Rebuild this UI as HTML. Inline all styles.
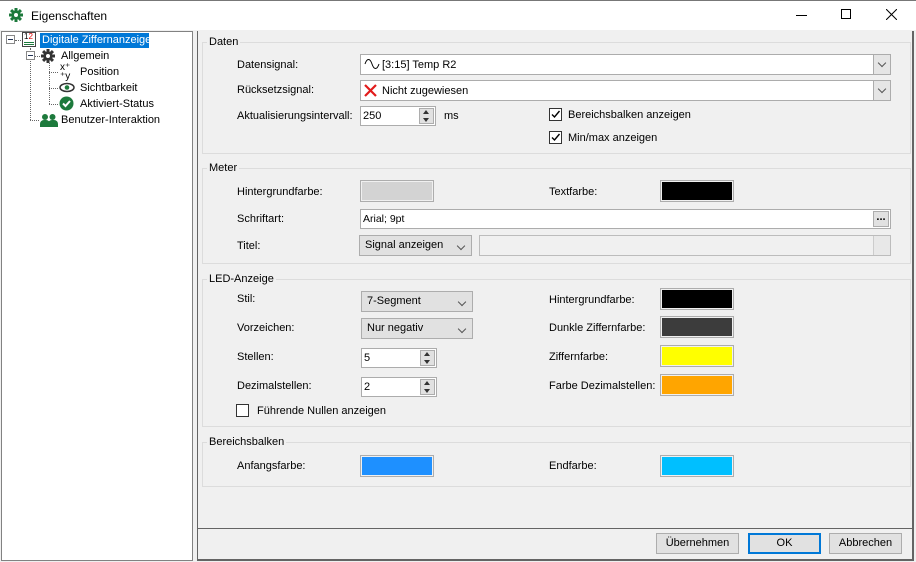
<!DOCTYPE html>
<html><head><meta charset="utf-8"><style>
*{box-sizing:border-box;margin:0;padding:0}
body{width:916px;height:562px;position:relative;background:#fff;font-family:"Liberation Sans",sans-serif;font-size:11px;color:#000;overflow:hidden}
.a{position:absolute}
.t{position:absolute;white-space:nowrap;line-height:14px}
.grp{position:absolute;border:1px solid #dcdcdc;left:202px;width:709px}
.gl{position:absolute;background:#f0f0f0;padding:0 2px;left:207px;line-height:14px}
.cb{position:absolute;background:#fff;border:1px solid #acacac;height:21px}
.dd{position:absolute;right:0;top:0;width:17px;height:19px;background:#e5e5e5;border-left:1px solid #acacac}
.dd:after,.cv:after{content:"";position:absolute;left:5px;top:5px;width:5px;height:5px;border-right:1px solid #555;border-bottom:1px solid #555;transform:rotate(45deg)}
.cmb{position:absolute;background:#e1e1e1;border:1px solid #adadad;height:21px;padding-left:5px;line-height:19px}
.cv{position:absolute;right:4px;top:2px;width:14px;height:14px}
.sp{position:absolute;background:#fff;border:1px solid #acacac;height:20px;padding-left:2px;line-height:18px}
.spb{position:absolute;right:1px;top:1px;width:15px;height:16px;background:#e1e1e1;border:1px solid #adadad}
.spb:before{content:"";position:absolute;left:3px;top:1px;border:3.5px solid transparent;border-bottom:4px solid #333;border-top:0}
.spb:after{content:"";position:absolute;left:3px;bottom:1px;border:3.5px solid transparent;border-top:4px solid #333;border-bottom:0}
.chk{position:absolute;width:13px;height:13px;border:1px solid #333;background:#fff}
.col{position:absolute;width:74px;height:22px;border:1px solid #adadad;padding:1px}
.col i{display:block;width:100%;height:100%}
.btn{position:absolute;top:533px;height:21px;background:#e1e1e1;border:1px solid #adadad;text-align:center;line-height:19px}
</style></head><body>
<div class="a" style="left:0;top:0;width:916px;height:1px;background:#777"></div>
<svg class="a" style="left:9px;top:8px" width="14" height="14" viewBox="0 0 14 14"><g fill="#1d7a3c"><circle cx="7" cy="7" r="4.6"/><rect x="5.5" y="0" width="3" height="14"/><rect x="0" y="5.5" width="14" height="3"/><rect x="5.5" y="0" width="3" height="14" transform="rotate(45 7 7)"/><rect x="5.5" y="0" width="3" height="14" transform="rotate(-45 7 7)"/></g><circle cx="7" cy="7" r="2" fill="#fff"/></svg>
<div class="t" style="left:31px;top:9px;font-size:12px">Eigenschaften</div>
<div class="a" style="left:796px;top:15px;width:11px;height:1px;background:#000"></div>
<div class="a" style="left:841px;top:9px;width:10px;height:10px;border:1px solid #000"></div>
<svg class="a" style="left:886px;top:9px" width="11" height="11"><path d="M0 0L11 11M11 0L0 11" stroke="#000" stroke-width="1"/></svg>
<div class="a" style="left:0;top:30px;width:916px;height:532px;background:#f0f0f0"></div>
<!-- tree -->
<div class="a" style="left:1px;top:31px;width:192px;height:530px;background:#fff;border:1px solid #828282"></div>
<div class="a" style="left:6px;top:35px;width:9px;height:9px;border:1px solid #888;background:#fff"></div><div class="a" style="left:8px;top:39px;width:5px;height:1px;background:#235"></div>
<div class="a" style="left:15px;top:40px;width:6px;border-top:1px dotted #666"></div>
<div class="a" style="left:22px;top:32px;width:14px;height:15px;border:1px solid #444;background:#fff"></div>
<div class="t" style="left:24px;top:32px;font-size:8px;line-height:9px"><span style="color:#000">1</span><span style="color:#d00">2</span></div>
<div class="a" style="left:24px;top:42px;width:10px;height:1px;background:#1d7a3c"></div><div class="a" style="left:24px;top:44px;width:10px;height:1px;background:#1d7a3c"></div>
<div class="a" style="left:40px;top:33px;width:109px;height:15px;background:#0078d7"></div>
<div class="t" style="left:42px;top:33px;color:#fff">Digitale Ziffernanzeige</div>
<div class="a" style="left:30px;top:48px;height:72px;border-left:1px dotted #666"></div>
<div class="a" style="left:26px;top:51px;width:9px;height:9px;border:1px solid #888;background:#fff"></div><div class="a" style="left:28px;top:55px;width:5px;height:1px;background:#235"></div>
<div class="a" style="left:35px;top:56px;width:5px;border-top:1px dotted #666"></div>
<svg class="a" style="left:41px;top:49px" width="14" height="14" viewBox="0 0 14 14"><g fill="#333"><circle cx="7" cy="7" r="4.6"/><rect x="5.5" y="0" width="3" height="14"/><rect x="0" y="5.5" width="14" height="3"/><rect x="5.5" y="0" width="3" height="14" transform="rotate(45 7 7)"/><rect x="5.5" y="0" width="3" height="14" transform="rotate(-45 7 7)"/></g><circle cx="7" cy="7" r="2" fill="#fff"/></svg>
<div class="t" style="left:61px;top:49px">Allgemein</div>
<div class="a" style="left:49px;top:63px;height:41px;border-left:1px dotted #666"></div>
<div class="a" style="left:49px;top:72px;width:9px;border-top:1px dotted #666"></div>
<div class="a" style="left:49px;top:88px;width:9px;border-top:1px dotted #666"></div>
<div class="a" style="left:49px;top:104px;width:9px;border-top:1px dotted #666"></div>
<div class="a" style="left:30px;top:120px;width:9px;border-top:1px dotted #666"></div>
<div class="t" style="left:60px;top:63px;font-size:10px;line-height:9px">x⁺<br>⁺y</div>
<div class="t" style="left:80px;top:65px">Position</div>
<svg class="a" style="left:59px;top:82px" width="16" height="11"><ellipse cx="8" cy="5.5" rx="7" ry="4" fill="none" stroke="#333" stroke-width="1.5"/><circle cx="8" cy="5.5" r="2.3" fill="#1d7a3c"/></svg>
<div class="t" style="left:80px;top:81px">Sichtbarkeit</div>
<svg class="a" style="left:59px;top:96px" width="15" height="15"><circle cx="7.5" cy="7.5" r="7" fill="#1d7a3c"/><path d="M4 7.5l2.5 2.5 4.5-5" stroke="#fff" stroke-width="2" fill="none"/></svg>
<div class="t" style="left:80px;top:97px">Aktiviert-Status</div>
<svg class="a" style="left:40px;top:113px" width="18" height="14"><g fill="#1d7a3c"><circle cx="5" cy="4" r="3"/><circle cx="12.5" cy="4" r="3"/><path d="M0 14v-3a4 4 0 0 1 4-4h2a4 4 0 0 1 4 4v3z"/><path d="M8 14v-3a4 4 0 0 1 4-4h2a4 4 0 0 1 4 4v3z"/></g></svg>
<div class="t" style="left:61px;top:113px">Benutzer-Interaktion</div>
<!-- right panel -->
<div class="a" style="left:197px;top:31px;width:1px;height:530px;background:#646464"></div>
<div class="a" style="left:912px;top:31px;width:2px;height:530px;background:#646464"></div>
<div class="a" style="left:197px;top:559px;width:717px;height:2px;background:#646464"></div>
<div class="a" style="left:198px;top:528px;width:716px;height:1px;background:#646464"></div>
<!-- groups -->
<div class="grp" style="top:42px;height:112px"></div><div class="gl" style="top:35px">Daten</div>
<div class="grp" style="top:168px;height:96px"></div><div class="gl" style="top:161px">Meter</div>
<div class="grp" style="top:279px;height:148px"></div><div class="gl" style="top:272px">LED-Anzeige</div>
<div class="grp" style="top:442px;height:45px"></div><div class="gl" style="top:435px">Bereichsbalken</div>
<!-- Daten -->
<div class="t" style="left:237px;top:58px">Datensignal:</div>
<div class="cb" style="left:360px;top:54px;width:531px"><div class="dd"></div>
<svg class="a" style="left:3px;top:3px" width="16" height="12"><path d="M1 6C3 0 6 0 8 6S13 12 15 6" stroke="#000" fill="none"/></svg>
<div class="t" style="left:21px;top:3px">[3:15] Temp R2</div></div>
<div class="t" style="left:237px;top:83px">Rücksetzsignal:</div>
<div class="cb" style="left:360px;top:80px;width:531px"><div class="dd"></div>
<svg class="a" style="left:3px;top:3px" width="13" height="13"><path d="M1 1L12 12M12 1L1 12" stroke="#e21b1b" stroke-width="2.2"/></svg>
<div class="t" style="left:21px;top:3px">Nicht zugewiesen</div></div>
<div class="t" style="left:237px;top:109px">Aktualisierungsintervall:</div>
<div class="sp" style="left:360px;top:106px;width:76px">250<div class="spb"></div></div>
<div class="t" style="left:444px;top:109px">ms</div>
<div class="chk" style="left:549px;top:108px"></div><svg class="a" style="left:550px;top:109px" width="11" height="11"><path d="M2 5.5l2.5 2.5 5-6" stroke="#000" stroke-width="1.4" fill="none"/></svg>
<div class="t" style="left:568px;top:108px">Bereichsbalken anzeigen</div>
<div class="chk" style="left:549px;top:131px"></div><svg class="a" style="left:550px;top:132px" width="11" height="11"><path d="M2 5.5l2.5 2.5 5-6" stroke="#000" stroke-width="1.4" fill="none"/></svg>
<div class="t" style="left:568px;top:131px">Min/max anzeigen</div>
<!-- Meter -->
<div class="t" style="left:237px;top:185px">Hintergrundfarbe:</div>
<div class="col" style="left:360px;top:180px"><i style="background:#d3d3d3"></i></div>
<div class="t" style="left:549px;top:185px">Textfarbe:</div>
<div class="col" style="left:660px;top:180px"><i style="background:#000"></i></div>
<div class="t" style="left:237px;top:212px">Schriftart:</div>
<div class="cb" style="left:360px;top:209px;width:531px;height:20px"><div class="t" style="left:2px;top:2px;font-size:10.5px">Arial; 9pt</div>
<div class="a" style="right:1px;top:1px;width:16px;height:16px;background:#e1e1e1;border:1px solid #adadad;text-align:center;line-height:10px;font-weight:bold">...</div></div>
<div class="t" style="left:237px;top:239px">Titel:</div>
<div class="cmb" style="left:359px;top:235px;width:113px">Signal anzeigen<div class="cv"></div></div>
<div class="a" style="left:479px;top:235px;width:412px;height:21px;background:#f0f0f0;border:1px solid #bcbcbc"><div class="a" style="right:0;top:0;width:17px;height:19px;background:#e8e8e8;border-left:1px solid #ccc"></div></div>
<!-- LED -->
<div class="t" style="left:237px;top:292px">Stil:</div>
<div class="cmb" style="left:361px;top:291px;width:112px">7-Segment<div class="cv"></div></div>
<div class="t" style="left:237px;top:321px">Vorzeichen:</div>
<div class="cmb" style="left:361px;top:318px;width:112px">Nur negativ<div class="cv"></div></div>
<div class="t" style="left:237px;top:350px">Stellen:</div>
<div class="sp" style="left:361px;top:348px;width:76px">5<div class="spb"></div></div>
<div class="t" style="left:237px;top:379px">Dezimalstellen:</div>
<div class="sp" style="left:361px;top:377px;width:76px">2<div class="spb"></div></div>
<div class="chk" style="left:236px;top:404px"></div>
<div class="t" style="left:257px;top:404px">Führende Nullen anzeigen</div>
<div class="t" style="left:549px;top:293px">Hintergrundfarbe:</div>
<div class="col" style="left:660px;top:288px"><i style="background:#000"></i></div>
<div class="t" style="left:549px;top:321px">Dunkle Ziffernfarbe:</div>
<div class="col" style="left:660px;top:316px"><i style="background:#3c3c3c"></i></div>
<div class="t" style="left:549px;top:350px">Ziffernfarbe:</div>
<div class="col" style="left:660px;top:345px"><i style="background:#ffff00"></i></div>
<div class="t" style="left:549px;top:379px">Farbe Dezimalstellen:</div>
<div class="col" style="left:660px;top:374px"><i style="background:#ffa500"></i></div>
<!-- Bereich -->
<div class="t" style="left:237px;top:459px">Anfangsfarbe:</div>
<div class="col" style="left:360px;top:455px"><i style="background:#1e90ff"></i></div>
<div class="t" style="left:549px;top:459px">Endfarbe:</div>
<div class="col" style="left:660px;top:455px"><i style="background:#00bfff"></i></div>
<!-- buttons -->
<div class="btn" style="left:656px;width:83px">Übernehmen</div>
<div class="btn" style="left:748px;width:73px;border:2px solid #0078d7;line-height:17px">OK</div>
<div class="btn" style="left:829px;width:73px">Abbrechen</div>
</body></html>
